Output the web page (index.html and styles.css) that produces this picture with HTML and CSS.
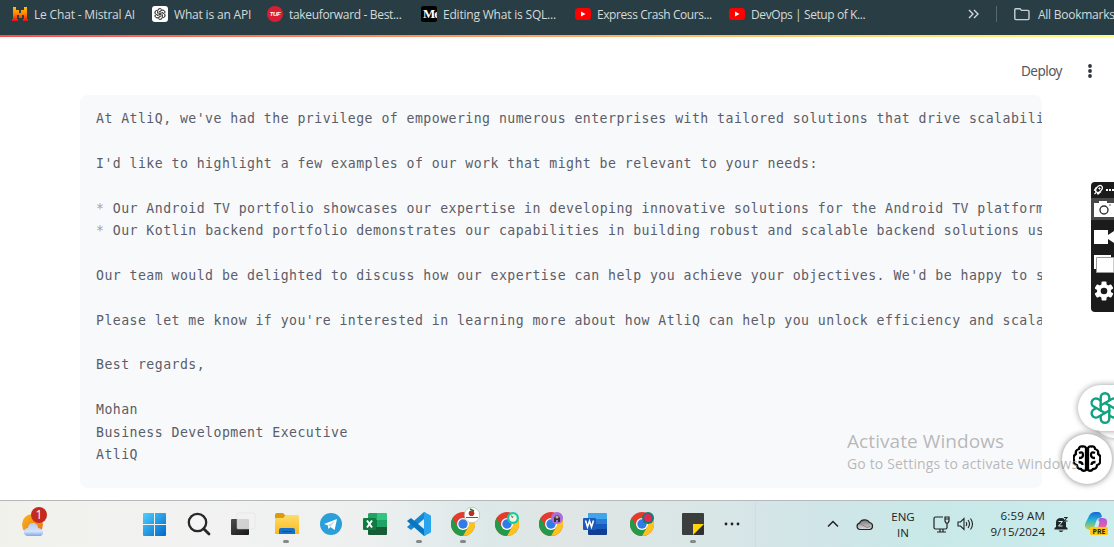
FILE: index.html
```html
<!DOCTYPE html>
<html lang="en">
<head>
<meta charset="utf-8">
<title>Email generator</title>
<link rel="stylesheet" href="styles.css">
</head>
<body>
<svg class="defs" width="0" height="0" aria-hidden="true">
  <defs>
    <linearGradient id="mistral" x2="0" y2="1"><stop stop-color="#ffc000"/><stop offset=".5" stop-color="#ff8205"/><stop offset="1" stop-color="#e81010"/></linearGradient>
    <linearGradient id="win" x2="1" y2="1"><stop stop-color="#4fd0ff"/><stop offset="1" stop-color="#0067c8"/></linearGradient>
    <linearGradient id="sun" x2="1" y2="1"><stop stop-color="#f7b71d"/><stop offset="1" stop-color="#ee6b1a"/></linearGradient>
    <linearGradient id="cloud" x2="0" y2="1"><stop stop-color="#b5cdf1"/><stop offset=".65" stop-color="#d5e3fa"/><stop offset="1" stop-color="#7ca7ec"/></linearGradient>
    <linearGradient id="dark" x2="1" y2="1"><stop stop-color="#4c4c4c"/><stop offset="1" stop-color="#171717"/></linearGradient>
    <linearGradient id="folder" x2="0" y2="1"><stop stop-color="#ffdc6b"/><stop offset="1" stop-color="#fbb91d"/></linearGradient>
    <linearGradient id="gray" x2="0" y2="1"><stop stop-color="#777"/><stop offset="1" stop-color="#ddd"/></linearGradient>
    <linearGradient id="copA" x2="0" y2="1"><stop stop-color="#1764d8"/><stop offset=".45" stop-color="#23b6d5"/><stop offset="1" stop-color="#d8cf35"/></linearGradient>
    <linearGradient id="copB" x2="0" y2="1"><stop stop-color="#a35be8"/><stop offset=".5" stop-color="#e65ba0"/><stop offset="1" stop-color="#ff9c55"/></linearGradient>
    <symbol id="chrome" viewBox="0 0 24 24">
      <circle cx="12" cy="12" r="12" fill="#e33b2e"/>
      <path d="M1.6 6A12 12 0 0 0 12 24l5.2-9L12 12 6.8 15z" fill="#249a48"/>
      <path d="M12 24A12 12 0 0 0 22.4 6H12l5.2 9z" fill="#fcc31e"/>
      <circle cx="12" cy="12" r="6" fill="#fff"/><circle cx="12" cy="12" r="4.7" fill="#2f7bea"/>
    </symbol>
    <symbol id="knot" viewBox="-12 -12 24 24">
      <g fill="none" stroke="currentColor" stroke-width="1.3" stroke-linejoin="round" stroke-linecap="round">
        <path id="petal" d="M-4.5-2.6V-6.5A4.4 4.4 0 0 1 3.1-9.7M-4.5-2.6L0 0M-1.2-4.7L3.2-7.3A4.4 4.4 0 0 1 9.6-2.8"/>
        <use href="#petal" transform="rotate(60)"/><use href="#petal" transform="rotate(120)"/><use href="#petal" transform="rotate(180)"/><use href="#petal" transform="rotate(240)"/><use href="#petal" transform="rotate(300)"/>
      </g>
    </symbol>
    <symbol id="youtube" viewBox="0 0 16 12"><rect width="16" height="12" rx="3.5" fill="#f00"/><path d="M6 3.5v5L10.5 6z" fill="#fff"/></symbol>
  </defs>
</svg>

<div class="screen">
  <nav class="bookmarks">
    <a class="bookmark bm-mistral"><svg width="16" height="16"><path d="M1 1h3v3h3v3h2V4h3V1h3v12h1v2h-5v-2h1V9h-2v3H7V9H5v4h1v2H0v-2h1z" fill="url(#mistral)"/></svg><span>Le Chat - Mistral AI</span></a>
    <a class="bookmark bm-api"><svg width="16" height="16"><rect width="16" height="16" rx="3" fill="#fff"/><use href="#knot" x="2" y="2" width="12" height="12" color="#222"/></svg><span>What is an API</span></a>
    <a class="bookmark bm-tuf"><svg width="16" height="16"><circle cx="8" cy="8" r="8" fill="#d81e34"/><text x="8" y="10.4" class="tuf-logo">TUF</text></svg><span>takeuforward - Best...</span></a>
    <a class="bookmark bm-sql"><svg width="16" height="16"><rect width="16" height="16" rx="2.5"/><text x="2" y="12.2" class="medium-logo">Me</text></svg><span>Editing What is SQL...</span></a>
    <a class="bookmark bm-express"><svg width="16" height="12"><use href="#youtube"/></svg><span>Express Crash Cours...</span></a>
    <a class="bookmark bm-devops"><svg width="16" height="12"><use href="#youtube"/></svg><span>DevOps | Setup of K...</span></a>
    <div class="bookmark-end">
      <svg width="11" height="10" fill="none" stroke="#d2d8da" stroke-width="1.4"><path d="M1 1l4 4-4 4M6 1l4 4-4 4"/></svg>
      <i class="separator"></i>
      <svg width="16" height="13" fill="none" stroke="#c9d0d2" stroke-width="1.4"><path d="M.8 2.3V10.6q0 1 1 1H14q1 0 1-1V3.4q0-1-1-1H7.5L6 .8H1.8q-1 0-1 1z"/></svg>
      <span class="bm-all">All Bookmarks</span>
    </div>
  </nav>
  <div class="decoration"></div>

  <main class="app">
    <header class="toolbar">
      <span class="deploy">Deploy</span>
      <svg width="4" height="14" fill="#31333f"><circle cx="2" cy="2" r="1.9"/><circle cx="2" cy="7" r="1.9"/><circle cx="2" cy="12" r="1.9"/></svg>
    </header>
    <pre class="code">At AtliQ, we've had the privilege of empowering numerous enterprises with tailored solutions that drive scalability

I'd like to highlight a few examples of our work that might be relevant to your needs:

<span class="list">*</span> Our Android TV portfolio showcases our expertise in developing innovative solutions for the Android TV platform.
<span class="list">*</span> Our Kotlin backend portfolio demonstrates our capabilities in building robust and scalable backend solutions using

Our team would be delighted to discuss how our expertise can help you achieve your objectives. We'd be happy to schedule

Please let me know if you're interested in learning more about how AtliQ can help you unlock efficiency and scalability

Best regards,

Mohan
Business Development Executive
AtliQ</pre>
  </main>

  <footer class="taskbar">
    <div class="weather"><svg width="26" height="30"><circle cx="11.500" cy="17.500" r="10.500" fill="url(#sun)"/><path d="M6 29a4 4 0 0 1-1-7.500l2-.5a5 5 0 0 1 10 0l2 .5A4 4 0 0 1 20 29z" fill="url(#cloud)"/><circle cx="18" cy="8" r="8" fill="#c42b1c"/><text x="18" y="12.400" class="badge">1</text></svg></div>
    <div class="pinned">
      <div class="task"><svg width="23" height="23" fill="url(#win)"><path d="M0 1q0-1 1-1h10v11H0zM12 0h10q1 0 1 1v10H12zM0 12h11v11H1q-1 0-1-1zM12 12h11v10q0 1-1 1H12z"/></svg></div>
      <div class="task search"><svg width="24" height="24" fill="none" stroke="#292929" stroke-width="2.3"><circle cx="10.5" cy="10.5" r="8.7" fill="#f6f6f6"/><path d="M16.7 16.7l5.3 5.3" stroke-width="2.8" stroke-linecap="round"/></svg></div>
      <div class="task search"><svg width="24" height="23"><rect y="6" width="18" height="16" rx="1" fill="url(#dark)"/><rect x="6" width="18" height="16" rx="1" fill="#f2f2f2" stroke="#ddd" stroke-width=".5" opacity=".83"/></svg></div>
      <div class="task running search"><svg width="24" height="22"><path d="M0 2q0-2 2-2h6l3 3H22q2 0 2 2v15q0 1-1 1H1q-1 0-1-1z" fill="#d99b10"/><path d="M0 5h8l3-3h11q2 0 2 2v16q0 1-1 1H1q-1 0-1-1z" fill="url(#folder)"/><path d="M4 21v-4q0-2 2-2h12q2 0 2 2v4z" fill="#1670c7"/><path d="M7 18.5h10" stroke="#0c539c"/></svg></div>
      <div class="task search"><svg width="22" height="22"><circle cx="11" cy="11" r="11" fill="#2b9fd9"/><path d="M4 11l13-5-2.4 11-4.1-3-2 2-.8-3.7z" fill="#fff"/><path d="M7.7 12.3L15 8l-4.5 6" fill="#bddff0"/></svg></div>
      <div class="task"><svg width="24" height="22"><path d="M6 0h9v7H5V1z" fill="#21a366"/><path d="M14 0h9q1 0 1 1v6H14z" fill="#33c481"/><path d="M5 7h9v8H5z" fill="#107c41"/><path d="M14 7h10v8H14z" fill="#21a366"/><path d="M5 14h19v7q0 1-1 1H6q-1 0-1-1z" fill="#185c37"/><rect y="5" width="13" height="12" rx="1" fill="#107c41"/><path d="M4 7.5l5 7M9 7.5l-5 7" stroke="#fff" stroke-width="2"/></svg></div>
      <div class="task running"><svg width="24" height="24"><path d="M17 7L4 18l-4-3L17 0l2 1z" fill="#1687d1"/><path d="M17 17L4 6 0 9l17 15 2-1z" fill="#0875bd"/><path d="M17 0l6 3q1 0 1 2v14q0 2-1 2l-6 3z" fill="#29a5ef"/></svg></div>
      <div class="task running"><svg width="30" height="30"><use href="#chrome" x="3" y="5" width="24" height="24"/><circle cx="24" cy="8" r="7.7" fill="#fff" stroke="#aaa" stroke-width=".6"/><path d="M18 10.500h12" stroke="#c92e38"/><circle cx="23.500" cy="6.300" r="2.800" fill="#c12e25"/><path d="M22 2l4 2" stroke="#297332" stroke-width="1.500"/></svg></div>
      <div class="task"><svg width="30" height="30"><use href="#chrome" x="3" y="5" width="24" height="24"/><circle cx="21" cy="11" r="6" fill="#16cba8"/><circle cx="21" cy="11" r="3.7" fill="#f4f4df"/><path d="M20 11l-1-3 2 2 3-2z" fill="#333"/></svg></div>
      <div class="task"><svg width="30" height="30"><use href="#chrome" x="3" y="5" width="24" height="24"/><circle cx="21" cy="11" r="6" fill="#ad6bdc"/><path d="M18 15v-4q3-6 6 0v4h-2v-2h-2v2z" fill="#333"/><circle cx="21" cy="10" r="1.500" fill="#bcb3a9"/></svg></div>
      <div class="task"><svg width="24" height="22"><path d="M5 0h18q1 0 1 1v5H5z" fill="#41a5ee"/><path d="M5 6h19v5H5z" fill="#2b7cd3"/><path d="M5 11h19v5H5z" fill="#185abd"/><path d="M5 16h19v5q0 1-1 1H6q-1 0-1-1z" fill="#103f91"/><rect y="5" width="13" height="12" rx="1" fill="#185abd"/><path d="M2.5 7.5L4.5 14l2-6 2 6 2-6.5" fill="none" stroke="#fff" stroke-width="1.6"/></svg></div>
      <div class="task profile"><svg width="30" height="30"><use href="#chrome" x="3" y="5" width="24" height="24"/><circle cx="21" cy="11" r="6" fill="#137a73"/><circle cx="21" cy="11" r="3.9" fill="#e42855"/></svg></div>
      <div class="task running notes"><svg width="22" height="22"><path d="M1 0h20q1 0 1 1v10H11v11H1q-1 0-1-1V1q0-1 1-1z" fill="#3c3d3d"/><path d="M11 11h11L11 22z" fill="#ffd40a"/><path d="M22 11v10q0 1-1 1H11z" fill="#303030"/></svg></div>
      <div class="task more"><svg width="16" height="4" fill="#222"><circle cx="2" cy="2" r="1.4"/><circle cx="8" cy="2" r="1.4"/><circle cx="14" cy="2" r="1.4"/></svg></div>
    </div>
    <div class="tray">
      <svg class="chevron" width="12" height="8" fill="none" stroke="#222" stroke-width="1.5"><path d="M1 6.500l5-5 5 5"/></svg>
      <svg width="18" height="13"><path d="M4 11.500A3.200 3.200 0 0 1 3.500 5.200 5.500 5 0 0 1 13.500 4.500 3.600 3.600 0 0 1 14 11.500z" fill="url(#gray)" stroke="#222" stroke-width="1.200"/><path d="M4 5.500l7 4 3-1" fill="none" stroke="#888"/></svg>
      <div class="language"><span>ENG</span><span>IN</span></div>
      <svg class="network" width="17" height="17" fill="none" stroke="#222" stroke-width="1.200"><path d="M10 1H2.500Q1 1 1 2.500v9Q1 13 2.500 13h10q1.500 0 1.500-1.500V7M4 16h9M7 13v3M10 13v3M12 1h4v4l-1 2h-2l-1-2zM12 3h4"/></svg>
      <svg class="volume" width="17" height="14" fill="none" stroke="#222" stroke-width="1.100"><path d="M1 5h2.500L7 1.500v11L3.500 9H1zM9 5q1.500 2 0 4M11 3q3 4 0 8M13.500 1.500q4 5.500 0 11"/></svg>
      <div class="clock"><span class="time">6:59 AM</span><span class="date">9/15/2024</span></div>
      <svg class="bell" width="15" height="17"><path d="M2 11V6.500Q2 2 7 2t5 4.500V11l1.500 1v1.500H.5V12zM4.500 14.500h5q-2.500 3-5 0" fill="#1e2729"/><path d="M4.500 5.500h4l-4 4.500h4" fill="none" stroke="#d6edef"/><path d="M10 .5h4v5h-4z" fill="#cbecec"/><path d="M10 1.500h3L10 5h3.500" fill="none" stroke="#1e2729" stroke-width="1.100"/></svg>
      <svg class="copilot" width="24" height="24"><path d="M4 4q2-4 6-4h3q3 0 4 5l-2 1q-3 0-4 4l-2 6q-1 2-4 2-6-1-5-6z" fill="url(#copA)"/><path d="M15 6h3q5 0 4 6l-2 5q-1 4-6 4H9q3-1 4-5l1-4q1-3-1-4z" fill="url(#copB)"/><rect x="5" y="15" width="18" height="8" rx="1.500" fill="#ffc814"/><text x="14" y="21.500" class="pre">PRE</text></svg>
    </div>
  </footer>

  <div class="watermark"><p class="activate">Activate Windows</p><p class="settings">Go to Settings to activate Windows</p></div>
  <aside class="recorder">
    <svg width="23" height="16" fill="none" stroke="#fff"><ellipse cx="8" cy="7" rx="2.600" ry="4" transform="rotate(40 8 7)" stroke-width="1.300"/><path d="M5.500 5L3.500 8l1.500 1M10 9.500L7 12l-1-1.500M3.500 12l1.500-1.500" stroke-width="1.200"/><circle cx="8.500" cy="6.500" r=".7" fill="#fff"/><path d="M15 8h8" stroke-width="2" stroke-dasharray="2 1"/></svg>
    <svg class="selected" width="21" height="22"><path d="M1 5h5V3h8v2h7v14H1z" fill="#fff"/><circle cx="11" cy="12" r="4" fill="none" stroke="#333" stroke-width="1.400"/><circle cx="17" cy="7" r=".7" fill="#333"/></svg>
    <svg class="camera" width="20" height="14" fill="#fff"><path d="M0 0h14v5l6-4v12l-6-4v5H0z"/></svg>
    <svg class="windows" width="20" height="18"><path d="M0 0h17v14H0z" fill="#fff"/><path d="M2.500 2.500H20V17.500H2.500z" fill="#fff" stroke="#999"/></svg>
    <svg class="gear" width="20" height="20" viewBox="0 0 20 20"><g fill="#fff"><circle cx="10" cy="10" r="7"/><rect x="7.500" y=".5" width="5" height="19" rx="1"/><rect x="7.500" y=".5" width="5" height="19" rx="1" transform="rotate(60 10 10)"/><rect x="7.500" y=".5" width="5" height="19" rx="1" transform="rotate(120 10 10)"/></g><circle cx="10" cy="10" r="3.300" fill="#1b1b1b"/></svg>
  </aside>
  <div class="assistant-back"></div>
  <div class="assistant"><svg width="36" height="36" viewBox="-18 -18 36 36" fill="none" stroke="#10a37f" stroke-width="2.400" stroke-linecap="round"><path id="loop" d="M-4.300 2.500V-10.500A4.300 4.300 0 0 1 4.300-10.500V-8"/><use href="#loop" transform="rotate(60)"/><use href="#loop" transform="rotate(120)"/><use href="#loop" transform="rotate(180)"/><use href="#loop" transform="rotate(240)"/><use href="#loop" transform="rotate(300)"/></svg></div>
  <div class="brain"><svg width="28" height="28" viewBox="0 0 28 28" fill="none" stroke="#000" stroke-width="2.300" stroke-linejoin="round"><path id="lobe" d="M13 3q-1-2-3.500-1.500Q6 1 6 4 2 5 3 9-.5 11 1 15q-1 4 3 5 0 4 4 4 2 3 5 1zM6 8q4-2 4 2 0 3-4 3M5.500 17q4 0 4 3"/><use href="#lobe" transform="matrix(-1 0 0 1 28 0)"/></svg></div>
</div>
</body>
</html>
```

FILE: styles.css
```css
* { box-sizing: border-box; }
body { margin: 0; background: #fff; font-family: "Open Sans", sans-serif; }
svg { display: block; flex: none; }
.defs { position: absolute; }
.screen { position: relative; width: 1114px; height: 547px; overflow: hidden; display: flex; flex-direction: column; }

.bookmarks { height: 35px; flex: none; display: flex; align-items: center; padding: 0 0 7px 12px; background: #293e44; color: #d5dadb; font-size: 12px; white-space: nowrap; }
.bookmark { display: flex; align-items: center; gap: 6px; flex: none; }
.bookmark svg { overflow: hidden; }
.bm-mistral { width: 140px; letter-spacing: -.18px; }
.bm-api { width: 115px; letter-spacing: -.18px; }
.bm-tuf { width: 154px; letter-spacing: -.33px; }
.bm-sql { width: 154px; letter-spacing: -.2px; }
.bm-express { width: 154px; letter-spacing: -.42px; }
.bm-devops { width: 239px; letter-spacing: -.41px; }
.bm-all { letter-spacing: -.25px; margin-left: 8px; }
.bookmark-end { display: flex; align-items: center; }
.separator { width: 1px; height: 16px; background: #56686d; margin: 0 17px 0 17px; }
.tuf-logo { font: italic bold 6px "Liberation Sans", sans-serif; fill: #fff; text-anchor: middle; }
.medium-logo { font: bold 13px "Liberation Serif", serif; fill: #fff; letter-spacing: -1px; }
.decoration { height: 2px; flex: none; background: linear-gradient(90deg, #ff4b4b, #fffd80); }

.app { height: 463px; flex: none; }
.toolbar { height: 58px; display: flex; align-items: center; justify-content: flex-end; gap: 26px; padding: 10px 22px 0 0; }
.deploy { font: 13.5px "Noto Sans", sans-serif; color: #555762; letter-spacing: -.5px; }
.code { width: 962px; height: 393px; margin: 0 0 0 80px; padding: 13px 0 0 16px; background: #f8f9fb; border-radius: 8px; overflow: hidden; font: 13.2px/22.4px "DejaVu Sans Mono", monospace; letter-spacing: .454px; color: #5b5d68; }
.list { color: #a0a1a7; }

.taskbar { height: 47px; flex: none; display: flex; border-top: 1px solid #b5b9b9; background: linear-gradient(90deg, #f1f1ec 0, #f2f2f2 18%, #eef0f0 33%, #dce8e8 44%, #e0e6e5 50%, #d8e6e7 65%, #d0e5e7 74%, #c8e9e8 84%, #cceced 100%); }
.weather { width: 132px; padding: 6px 0 0 21px; }
.pinned { display: flex; width: 624px; border-right: 1px solid #cedddd; }
.task { position: relative; width: 44.1px; flex: none; display: flex; align-items: center; justify-content: center; }
.task svg { overflow: visible; }
.task svg[height="30"] { margin-bottom: 5px; }
.search svg { margin-left: 2px; }
.running::after { content: ""; position: absolute; bottom: 4px; left: calc(50% - 3px); width: 6px; height: 3px; border-radius: 2px; background: #858888; }
.profile { margin-left: 3px; }
.notes { margin-left: 7px; }
.more { width: 34px; }
.badge { font: 12px "Open Sans", sans-serif; fill: #fff; text-anchor: middle; }
.tray { flex: 1; display: flex; align-items: center; padding-left: 71px; color: #222; font-size: 11.5px; }
.tray > * { flex: none; }
.chevron { margin-right: 17px; }
.language { width: 32px; margin-left: 13px; display: flex; flex-direction: column; align-items: center; line-height: 16px; padding-top: 2px; }
.network { margin-left: 14px; }
.volume { margin-left: 7px; }
.clock { width: 71px; display: flex; flex-direction: column; align-items: flex-end; line-height: 16px; padding-bottom: 1px; }
.time { letter-spacing: .15px; }
.bell { margin-left: 9px; }
.copilot { margin-left: 16px; }
.pre { font: bold 7px "Open Sans", sans-serif; fill: #292416; text-anchor: middle; }

.recorder { position: absolute; left: 1091px; top: 182px; width: 28px; height: 130px; border-radius: 4px; background: #1b1b1b; overflow: hidden; }
.selected { width: 26px; padding-left: 2px; background: #484848; }
.recorder .camera { margin: 10px 0 0 3px; }
.recorder .windows { margin: 11px 0 0 3px; }
.recorder .gear { margin: 8px 0 0 3px; }
.assistant, .assistant-back { position: absolute; left: 1078px; top: 385px; width: 60px; height: 46px; border-radius: 23px; background: #fff; box-shadow: 0 0 6px rgba(0,0,0,.4); }
.assistant-back { left: 1092px; top: 392px; }
.assistant { padding: 5px 0 0 9px; }
.brain { position: absolute; left: 1062px; top: 434px; width: 50px; height: 50px; border-radius: 50%; display: flex; align-items: center; justify-content: center; background: #fff; box-shadow: 0 0 6px rgba(0,0,0,.5); }
.watermark { position: absolute; z-index: 1; left: 847px; top: 428px; width: 240px; color: rgba(155,155,155,.7); white-space: nowrap; }
.watermark p { margin: 0; }
.activate { font-size: 19px; line-height: 26px; letter-spacing: .08px; }
.settings { font-size: 14px; line-height: 20px; letter-spacing: .16px; }
```
